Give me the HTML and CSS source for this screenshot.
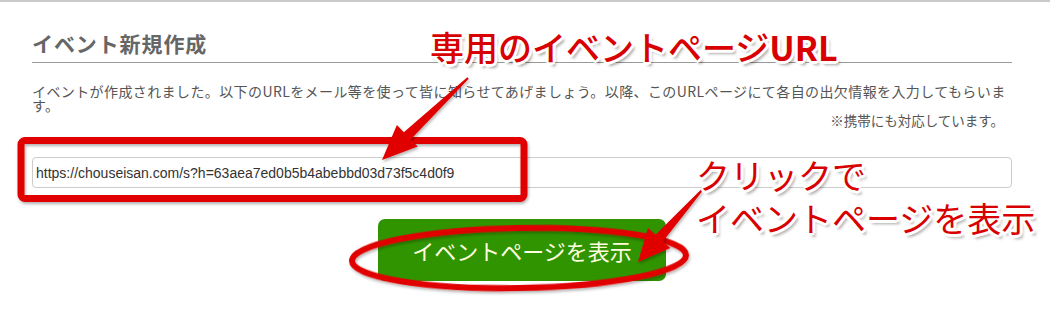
FILE: index.html
```html
<!DOCTYPE html>
<html lang="ja">
<head>
<meta charset="utf-8">
<title>イベント新規作成</title>
<link rel="stylesheet" href="styles.css">
</head>
<body>
<div class="page">
  <h2 class="title">イベント新規作成</h2>
  <p class="lead">イベントが作成されました。以下のURLをメール等を使って皆に知らせてあげましょう。以降、このURLページにて各自の出欠情報を入力してもらいます。</p>
  <p class="note">※携帯にも対応しています。</p>
  <input class="url" type="text" value="https://chouseisan.com/s?h=63aea7ed0b5b4abebbd03d73f5c4d0f9" readonly>
  <div class="btn-row"><a class="btn" href="#">イベントページを表示</a></div>
</div>

<svg class="marks" width="1050" height="316" viewBox="0 0 1050 316" xmlns="http://www.w3.org/2000/svg">
  <defs>
    <filter id="sh" x="-10%" y="-10%" width="120%" height="130%">
      <feDropShadow dx="1" dy="2" stdDeviation="1.5" flood-color="#000" flood-opacity="0.3"/>
    </filter>
  </defs>
  <rect x="21" y="140.5" width="503" height="58" rx="4" fill="none" stroke="#e00000" stroke-width="7" filter="url(#sh)"/>
  <ellipse cx="519" cy="258" rx="167" ry="30" fill="none" stroke="#e00000" stroke-width="6" transform="rotate(-1 519 258)" filter="url(#sh)"/>
  <polygon points="467.3,77.3 403.8,132.2 396.9,125 382,160 417.7,146.6 410.7,139.4 468.7,78.7" fill="#e00000" filter="url(#sh)"/>
  <polygon points="701.3,189.3 655.5,234.8 648,228.1 638,262 670.4,248.1 662.9,241.4 702.7,190.7" fill="#e00000" filter="url(#sh)"/>
</svg>

<div class="label label-url">専用のイベントページ<span class="strong">URL</span></div>
<div class="label label-click">
  <div class="label-line">クリックで</div>
  <div class="label-line">イベントページを表示</div>
</div>
</body>
</html>
```

FILE: styles.css
```css
html, body {
  margin: 0;
  padding: 0;
  background: #fff;
}
body {
  border-top: 2px solid #cacaca;
  position: relative;
  width: 1050px;
  height: 314px;
  overflow: hidden;
  font-family: "Noto Sans CJK JP", "Noto Sans", sans-serif;
}
.page {
  padding: 27px 38px 0 32px;
}
.title {
  margin: 0;
  font-size: 21px;
  line-height: 28px;
  font-weight: 700;
  letter-spacing: 0.9px;
  color: #666;
  padding-bottom: 5px;
  border-bottom: 1px solid #999;
}
.lead {
  margin: 21px 0 0;
  font-size: 14px;
  line-height: 14px;
  letter-spacing: 0.4px;
  color: #555;
}
.note {
  margin: 1px 0 0;
  padding-right: 8px;
  text-align: right;
  font-size: 13.5px;
  line-height: 15px;
  color: #555;
}
.url {
  display: block;
  box-sizing: border-box;
  width: 100%;
  height: 31px;
  margin: 29px 0 0;
  padding: 0 3px;
  border: 1px solid #ccc;
  border-radius: 4px;
  font-family: "Liberation Sans", Arial, sans-serif;
  font-size: 14px;
  color: #333;
  background: #fff;
  outline: none;
}
.btn-row {
  display: flex;
  justify-content: center;
  margin-top: 31px;
}
.btn {
  display: flex;
  align-items: center;
  justify-content: center;
  width: 288px;
  height: 62px;
  border-radius: 7px;
  background: #309400;
  color: #ffffe0;
  font-size: 22px;
  text-decoration: none;
}
.marks {
  position: absolute;
  left: 0;
  top: -2px;
  pointer-events: none;
}
.label {
  position: absolute;
  color: #d80000;
  white-space: nowrap;
  text-shadow:
    2px 0 #fff, -2px 0 #fff, 0 2px #fff, 0 -2px #fff,
    2px 2px #fff, -2px -2px #fff, 2px -2px #fff, -2px 2px #fff,
    3px 0 #fff, -3px 0 #fff, 0 3px #fff, 0 -3px #fff,
    3px 4px 3px rgba(0, 0, 0, 0.35);
}
.label-url {
  left: 430px;
  top: 28px;
  font-size: 34px;
  line-height: 34px;
  font-weight: 500;
}
.strong {
  font-weight: 700;
}
.label-click {
  left: 696px;
  top: 153px;
  font-size: 34px;
  font-weight: 400;
}
.label-line {
  height: 43px;
  line-height: 40px;
}
```
